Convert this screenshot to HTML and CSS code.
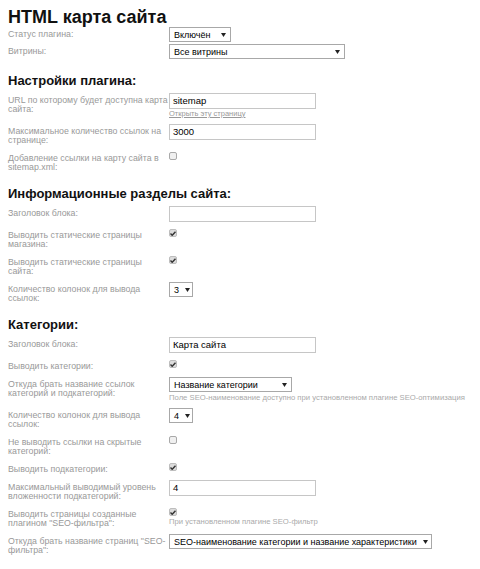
FILE: index.html
```html
<!DOCTYPE html>
<html lang="ru">
<head>
<meta charset="utf-8">
<title>HTML карта сайта</title>
<link rel="stylesheet" href="styles.css">
</head>
<body>
<div class="page">
  <h1 class="title">HTML карта сайта</h1>

  <div class="field tight">
    <div class="name">Статус плагина:</div>
    <div class="value"><div class="select w-status"><span>Включён</span><svg class="arrow" width="5" height="4" viewBox="0 0 5 4"><path d="M0 0H5L2.5 4Z"/></svg></div></div>
  </div>
  <div class="field tight">
    <div class="name">Витрины:</div>
    <div class="value"><div class="select w-wide"><span>Все витрины</span><svg class="arrow" width="5" height="4" viewBox="0 0 5 4"><path d="M0 0H5L2.5 4Z"/></svg></div></div>
  </div>

  <h2 class="section">Настройки плагина:</h2>

  <div class="field">
    <div class="name">URL по которому будет доступна карта сайта:</div>
    <div class="value">
      <div class="input">sitemap</div>
      <a class="link">Открыть эту страницу</a>
    </div>
  </div>
  <div class="field">
    <div class="name">Максимальное количество ссылок на странице:</div>
    <div class="value"><div class="input">3000</div></div>
  </div>
  <div class="field">
    <div class="name">Добавление ссылки на карту сайта в sitemap.xml:</div>
    <div class="value"><span class="checkbox"></span></div>
  </div>

  <h2 class="section">Информационные разделы сайта:</h2>

  <div class="field">
    <div class="name">Заголовок блока:</div>
    <div class="value"><div class="input"></div></div>
  </div>
  <div class="field">
    <div class="name">Выводить статические страницы магазина:</div>
    <div class="value"><span class="checkbox checked"><svg width="6" height="5" viewBox="0 0 6 5"><path d="M0.5 2.6L2.2 4.3L5.5 0.7" fill="none" stroke="#333" stroke-width="1.4"/></svg></span></div>
  </div>
  <div class="field">
    <div class="name">Выводить статические страницы сайта:</div>
    <div class="value"><span class="checkbox checked"><svg width="6" height="5" viewBox="0 0 6 5"><path d="M0.5 2.6L2.2 4.3L5.5 0.7" fill="none" stroke="#333" stroke-width="1.4"/></svg></span></div>
  </div>
  <div class="field">
    <div class="name">Количество колонок для вывода ссылок:</div>
    <div class="value"><div class="select w-num"><span>3</span><svg class="arrow" width="5" height="4" viewBox="0 0 5 4"><path d="M0 0H5L2.5 4Z"/></svg></div></div>
  </div>

  <h2 class="section">Категории:</h2>

  <div class="field">
    <div class="name">Заголовок блока:</div>
    <div class="value"><div class="input">Карта сайта</div></div>
  </div>
  <div class="field">
    <div class="name">Выводить категории:</div>
    <div class="value"><span class="checkbox checked"><svg width="6" height="5" viewBox="0 0 6 5"><path d="M0.5 2.6L2.2 4.3L5.5 0.7" fill="none" stroke="#333" stroke-width="1.4"/></svg></span></div>
  </div>
  <div class="field">
    <div class="name">Откуда брать название ссылок категорий и подкатегорий:</div>
    <div class="value">
      <div class="select w-name"><span>Название категории</span><svg class="arrow" width="5" height="4" viewBox="0 0 5 4"><path d="M0 0H5L2.5 4Z"/></svg></div>
      <div class="hint">Поле SEO-наименование доступно при установленном плагине SEO-оптимизация</div>
    </div>
  </div>
  <div class="field">
    <div class="name">Количество колонок для вывода ссылок:</div>
    <div class="value"><div class="select w-num"><span>4</span><svg class="arrow" width="5" height="4" viewBox="0 0 5 4"><path d="M0 0H5L2.5 4Z"/></svg></div></div>
  </div>
  <div class="field">
    <div class="name">Не выводить ссылки на скрытые категорий:</div>
    <div class="value"><span class="checkbox"></span></div>
  </div>
  <div class="field">
    <div class="name">Выводить подкатегории:</div>
    <div class="value"><span class="checkbox checked"><svg width="6" height="5" viewBox="0 0 6 5"><path d="M0.5 2.6L2.2 4.3L5.5 0.7" fill="none" stroke="#333" stroke-width="1.4"/></svg></span></div>
  </div>
  <div class="field">
    <div class="name">Максимальный выводимый уровень вложенности подкатегорий:</div>
    <div class="value"><div class="input">4</div></div>
  </div>
  <div class="field">
    <div class="name">Выводить страницы созданные плагином "SEO-фильтра":</div>
    <div class="value">
      <span class="checkbox checked"><svg width="6" height="5" viewBox="0 0 6 5"><path d="M0.5 2.6L2.2 4.3L5.5 0.7" fill="none" stroke="#333" stroke-width="1.4"/></svg></span>
      <div class="hint">При установленном плагине SEO-фильтр</div>
    </div>
  </div>
  <div class="field">
    <div class="name">Откуда брать название страниц "SEO-фильтра":</div>
    <div class="value"><div class="select w-seo"><span>SEO-наименование категории и название характеристики</span><svg class="arrow" width="5" height="4" viewBox="0 0 5 4"><path d="M0 0H5L2.5 4Z"/></svg></div></div>
  </div>
</div>
</body>
</html>
```

FILE: styles.css
```css
html, body {
  margin: 0;
  padding: 0;
  background: #fff;
}

body {
  font-family: "Liberation Sans", Arial, sans-serif;
  color: #000;
}

.page {
  padding: 7px 8px 0 8px;
}

.title {
  margin: 0;
  font-size: 18px;
  line-height: 20px;
  font-weight: bold;
  color: #111;
}

.section {
  margin: 14px 0 5px 0;
  font-size: 13px;
  line-height: 15px;
  font-weight: bold;
  color: #111;
}

.field {
  display: flex;
  align-items: flex-start;
  margin-bottom: 6px;
}

.field.tight {
  margin-bottom: 2px;
}

.name {
  flex: 0 0 161px;
  width: 161px;
  padding-top: 3px;
  font-size: 8.8px;
  line-height: 9px;
  color: #999;
}

.value {
  display: flex;
  flex-direction: column;
  align-items: flex-start;
}

.input {
  box-sizing: border-box;
  width: 147px;
  height: 16px;
  border: 1px solid #c6c6c6;
  padding: 0 3px;
  font-size: 9.5px;
  line-height: 14px;
  color: #000;
  background: #fff;
}

.select {
  box-sizing: border-box;
  height: 15px;
  border: 1px solid #a8a8a8;
  display: flex;
  align-items: center;
  justify-content: space-between;
  padding: 0 4px 0 4px;
  font-size: 9px;
  color: #000;
  background: #fff;
  white-space: nowrap;
}

.select .arrow {
  fill: #222;
  flex: 0 0 auto;
  margin-left: 6px;
}

.w-status { width: 62px; }
.w-wide { width: 176px; }
.w-num { width: 24px; padding-left: 4px; padding-right: 3px; }
.w-name { width: 123px; }
.w-seo { width: 263px; }

.link {
  margin-top: 1px;
  font-size: 7.5px;
  line-height: 8px;
  color: #999;
  text-decoration: underline;
}

.hint {
  margin-top: 1px;
  font-size: 7.7px;
  line-height: 9px;
  color: #aaa;
  white-space: nowrap;
}

.checkbox {
  box-sizing: border-box;
  margin-top: 1px;
  width: 8px;
  height: 8px;
  border: 1px solid #a9a9a9;
  border-radius: 2px;
  background: #f0f0f0;
  display: flex;
  align-items: center;
  justify-content: center;
}

.checkbox.checked {
  background: #dcdcdc;
  border-color: #bdbdbd;
}

.checkbox svg {
  display: block;
}
```
